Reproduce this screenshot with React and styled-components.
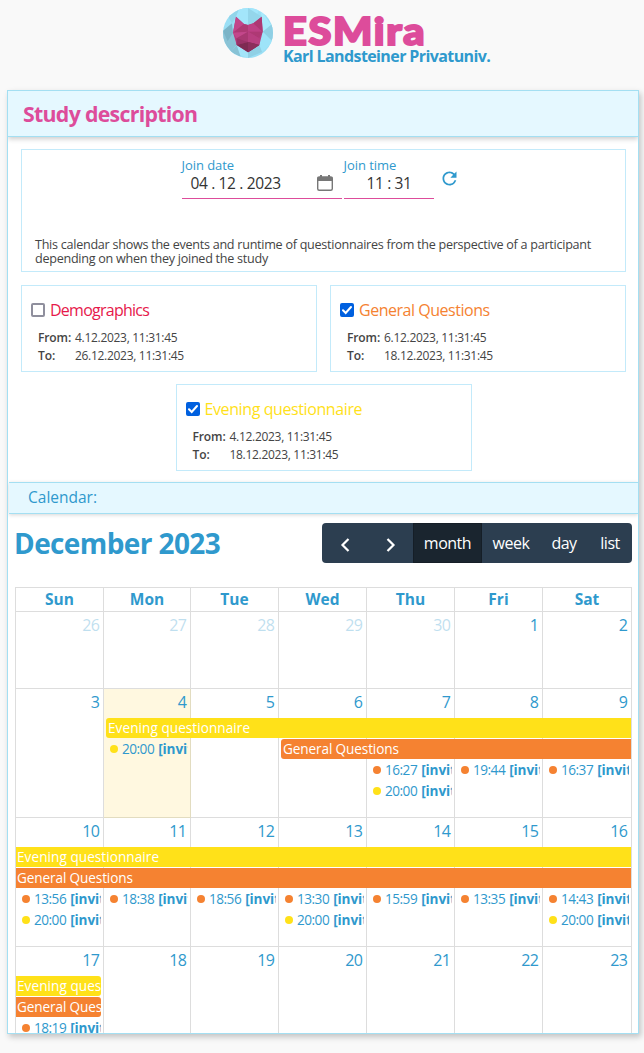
import React from "react";
import styled, { createGlobalStyle } from "styled-components";
import { MdRefresh } from "react-icons/md";

const blue = "#2f99cd";
const pink = "#dd4c9b";
const line = "#a4dff2";
const cardLine = "#c3eafa";
const yellow = "#ffe119";
const orange = "#f58231";
const red = "#e6194b";

const GlobalStyle = createGlobalStyle`
  * { box-sizing: border-box; }
  body {
    margin: 0;
    background: #f9f9f9;
    color: #444;
    font-family: "Open Sans", "Noto Sans", sans-serif;
    overflow: hidden;
  }
`;

const Page = styled.div`
  width: 644px;
  height: 1053px;
  display: flex;
  flex-direction: column;
  overflow: hidden;
`;

const Header = styled.header`
  display: flex;
  height: 90px;
  padding: 8px 0 0 223px;
  gap: 10px;
`;

const Brand = styled.div`
  display: flex;
  flex-direction: column;
  white-space: nowrap;
`;

const BrandName = styled.div`
  height: 39px;
  padding-top: 2px;
  font: 900 37px/41px Lato, sans-serif;
  letter-spacing: 1.5px;
  color: ${pink};
  -webkit-text-stroke: 2px ${pink};
  transform: scaleX(1.12);
  transform-origin: left;
`;

const BrandServer = styled.div`
  font-size: 16px;
  line-height: 19px;
  font-weight: 700;
  letter-spacing: -0.6px;
  color: ${blue};
`;

const Panel = styled.main`
  width: 632px;
  height: 944px;
  margin-left: 7px;
  display: flex;
  flex-direction: column;
  background: #fff;
  border: 1px solid ${line};
  box-shadow: 2px 3px 6px rgba(0, 0, 0, 0.22);
  overflow: hidden;
`;

const Title = styled.h1`
  flex: none;
  height: 46px;
  margin: 0;
  padding-left: 15px;
  background: #e5f8ff;
  border-bottom: 1px solid ${line};
  box-shadow: 0 2px 5px rgba(0, 0, 0, 0.2);
  color: ${pink};
  font-size: 21.3px;
  line-height: 45px;
  letter-spacing: -0.7px;
`;

const JoinBox = styled.section`
  flex: none;
  width: 605px;
  height: 123px;
  margin: 12px 0 13px 13px;
  padding: 7px 13px 0;
  border: 1px solid ${cardLine};
`;

const JoinFields = styled.div`
  display: flex;
  justify-content: center;
  height: 81px;
  padding-right: 6px;
  gap: 2px;
`;

const Field = styled.label`
  display: flex;
  flex-direction: column;
  width: ${(p) => p.$width}px;
  height: 42px;
  font-size: 13px;
  line-height: 16px;
  letter-spacing: -0.05px;
  color: ${blue};
  border-bottom: 1px solid ${pink};
`;

const FieldValue = styled.span`
  display: flex;
  justify-content: space-between;
  align-items: center;
  padding: 0 8px 0 ${(p) => p.$left}px;
  height: 20px;
  font-size: 15.5px;
  letter-spacing: -0.35px;
  color: #333;
  white-space: pre;
`;

const Refresh = styled.button`
  display: flex;
  align-items: center;
  justify-content: center;
  width: 20px;
  height: 20px;
  margin: 11px 0 0 4px;
  padding: 0;
  border: 0;
  background: none;
  color: ${blue};
  svg { flex: none; }
`;

const Note = styled.p`
  margin: 0;
  font-size: 12.6px;
  line-height: 14px;
  letter-spacing: -0.27px;
  white-space: nowrap;
`;

const Cards = styled.section`
  flex: none;
  display: flex;
  flex-wrap: wrap;
  justify-content: center;
  gap: 12px 13px;
  height: 197px;
  padding-left: 1px;
  align-content: flex-start;
`;

const Card = styled.article`
  width: 296px;
  height: 87px;
  padding: 13px 9px 0;
  border: 1px solid ${cardLine};
`;

const CardTitle = styled.label`
  display: flex;
  align-items: center;
  gap: 5px;
  height: 21px;
  margin-bottom: 9px;
  font-size: 16px;
  letter-spacing: ${(p) => p.$spacing}px;
  color: ${(p) => p.$color};
`;

const CheckBox = styled.span`
  display: flex;
  width: 14px;
  height: 14px;
  border: 2px solid ${(p) => (p.$on ? "#0060df" : "#8f8f9d")};
  border-radius: 2px;
  background: ${(p) => (p.$on ? "#0060df" : "#fff")};
  svg { width: 10px; height: 10px; }
`;

const Range = styled.dl`
  display: grid;
  grid-template-columns: 37px 1fr;
  grid-auto-rows: 18px;
  margin: 0 0 0 7px;
  font-size: 12px;
  line-height: 18px;
  letter-spacing: -0.3px;
  dt { font-weight: 600; letter-spacing: -0.1px; }
  dd { margin: 0; }
`;

const SectionBar = styled.h2`
  flex: none;
  height: 32px;
  margin: 0 0 0 1px;
  padding-left: 19px;
  background: #e5f8ff;
  border: solid ${line};
  border-width: 1px 0;
  box-shadow: 0 1px 4px rgba(0, 0, 0, 0.16);
  color: ${blue};
  font-size: 15.5px;
  font-weight: 400;
  line-height: 29px;
`;

const Toolbar = styled.div`
  flex: none;
  display: flex;
  justify-content: space-between;
  align-items: flex-start;
  height: 73px;
  padding: 9px 6px 0 6px;
`;

const Month = styled.h2`
  margin: 0;
  font-size: 28px;
  line-height: 40px;
  letter-spacing: -0.6px;
  color: ${blue};
`;

const ButtonGroup = styled.div`
  display: flex;
  width: 310px;
  height: 40px;
  border-radius: 4px;
  overflow: hidden;
  background: #2c3e50;
`;

const Button = styled.button`
  display: flex;
  align-items: center;
  justify-content: center;
  width: ${(p) => p.$width}px;
  padding: ${(p) => (p.$icon ? "4px 0 0" : "0 0 1px")};
  border: 1px solid ${(p) => (p.$active ? "#151e27" : "transparent")};
  background: ${(p) => (p.$active ? "#1a252f" : "transparent")};
  color: #fff;
  font: 400 16px "Open Sans", sans-serif;
  letter-spacing: -0.5px;
`;

const Calendar = styled.div`
  flex: none;
  width: 617px;
  margin-left: 7px;
  border: solid #ddd;
  border-width: 1px 0 0 1px;
`;

const Week = styled.div`
  display: grid;
  grid-template-columns: 88px 87px 88px 88px 88px 88px 89px;
  grid-template-rows: ${(p) => (p.$empty ? "29px 1fr" : "29px repeat(4, 21px) 1fr")};
  height: ${(p) => p.$height}px;
`;

const DayNames = styled(Week)`
  grid-template-rows: 24px;
`;

const DayName = styled.div`
  border: solid #ddd;
  border-width: 0 1px 1px 0;
  color: ${blue};
  font-size: 15.5px;
  font-weight: 700;
  line-height: 23px;
  text-align: center;
`;

const Day = styled.div`
  grid-row: 1 / -1;
  grid-column: ${(p) => p.$col};
  padding: 3px 4px 0 0;
  border: solid ${(p) => (p.$today ? "#e2dcc0" : "#ddd")};
  border-width: 0 1px 1px 0;
  background: ${(p) => (p.$today ? "#fff8e0" : "#fff")};
  color: ${blue};
  text-align: right;
  font-size: 16px;
  line-height: 20px;
  letter-spacing: -0.8px;
  span { opacity: ${(p) => (p.$muted ? 0.3 : 1)}; }
`;

const Bar = styled.div`
  grid-row: ${(p) => p.$row};
  grid-column: ${(p) => p.$from} / ${(p) => p.$to};
  height: 20px;
  margin: 0 ${(p) => (p.$ends ? 3 : 1)}px 0 ${(p) => (p.$starts ? 2 : 0)}px;
  padding-left: ${(p) => (p.$starts ? 2 : 1)}px;
  border-radius: ${(p) => (p.$starts ? 3 : 0)}px ${(p) => (p.$ends ? 3 : 0)}px ${(p) => (p.$ends ? 3 : 0)}px
    ${(p) => (p.$starts ? 3 : 0)}px;
  background: ${(p) => p.$color};
  color: #fff;
  font-size: 13.6px;
  line-height: 20px;
  letter-spacing: ${(p) => p.$spacing}px;
  white-space: nowrap;
  overflow: hidden;
`;

const Event = styled.div`
  grid-row: ${(p) => p.$row};
  grid-column: ${(p) => p.$col};
  display: flex;
  align-items: center;
  height: 20px;
  margin: 0 3px 0 2px;
  padding-left: 4px;
  color: ${blue};
  font-size: 13.6px;
  line-height: 20px;
  white-space: nowrap;
  overflow: hidden;
  b { margin-left: 4px; letter-spacing: -0.1px; }
`;

const Dot = styled.i`
  flex: none;
  width: 8px;
  height: 8px;
  margin-right: 4px;
  border-radius: 50%;
  background: ${(p) => p.$color};
`;

const Time = styled.span`
  letter-spacing: -0.5px;
`;

function Logo() {
  return (
    <svg width="50" height="50" viewBox="39 24 150 150">
      <defs>
        <clipPath id="disc"><circle cx="114" cy="99" r="75" /></clipPath>
      </defs>
      <g clipPath="url(#disc)">
        <rect x="39" y="24" width="150" height="150" fill="#9adff5" />
        <path d="M39 24h50L78 50 66 70z" fill="#92d5ea" />
        <path d="M89 24h60l-19 46-28 2-24-22z" fill="#a3e6fb" />
        <path d="M114 24l41 26-25 20-16 5z" fill="#94d6eb" />
        <path d="M149 24l40 60-31 11-3-45z" fill="#a8e9fc" />
        <path d="M189 70v56l-31-31z" fill="#8fcfe4" />
        <path d="M158 95l31 31-33 30-8-21z" fill="#9ee4f9" />
        <path d="M156 156l-42 18v-17l34-22z" fill="#90d0e5" />
        <path d="M39 92l30 6 11 37-16 20-25-30z" fill="#8ac3d6" />
        <path d="M39 92l27-22 3 28-16 26z" fill="#7bb4c7" />
        <path d="M64 155l16-20 34 22v17z" fill="#a3e5f9" />
        <path d="M80 135l12 35-30-14z" fill="#88c2d5" />
      </g>
      <path d="M78 50l24 22 12 3 16-5 25-20 3 45-10 40-34 22-34-22-11-37z" fill="#b83d80" />
      <path d="M78 50l24 22-33 26z" fill="#c2458a" />
      <path d="M102 72l12 3v20l-45 3z" fill="#ae3974" />
      <path d="M114 75l16-5 28 25-44 0z" fill="#bd4185" />
      <path d="M155 50l-25 20 28 25z" fill="#ad3873" />
      <path d="M69 98l45-3-34 20z" fill="#c3478b" />
      <path d="M158 95h-44l34 20z" fill="#ae3974" />
      <path d="M114 95l-34 20v20l34-9z" fill="#a93872" />
      <path d="M114 95l34 20v20l-34-9z" fill="#b83f80" />
      <path d="M80 135v-20l34 11z" fill="#9a3368" />
      <path d="M80 135l34-9 34 9-34 22z" fill="#7e2a52" />
      <path d="M114 126l34 9-34 22z" fill="#8c2e5c" />
    </svg>
  );
}

const CalendarIcon = () => (
  <svg width="18" height="18" viewBox="0 0 18 18">
    <rect x="1.700" y="3" width="14.600" height="13.300" rx="1.500" fill="none" stroke="#777" strokeWidth="1.400" />
    <path d="M1.500 3h15v4h-15zM4 1h2v2H4zM12 1h2v2h-2z" fill="#777" />
  </svg>
);

const Chevron = ({ d }) => (
  <svg width="16" height="18" viewBox="0 0 16 18" fill="none" stroke="#fff" strokeWidth="2.2">
    <path d={d} />
  </svg>
);

function Questionnaire({ name, color, spacing, on, from, to }) {
  return (
    <Card>
      <CardTitle $color={color} $spacing={spacing}>
        <CheckBox $on={on}>
          {on && (
            <svg viewBox="0 0 10 10" fill="none" stroke="#fff" strokeWidth="2" strokeLinecap="round">
              <path d="M1 5.200L3.700 8 9 2" />
            </svg>
          )}
        </CheckBox>
        {name}
      </CardTitle>
      <Range>
        <dt>From:</dt>
        <dd>{from}</dd>
        <dt>To:</dt>
        <dd>{to}</dd>
      </Range>
    </Card>
  );
}

const evening = "Evening questionnaire";
const general = "General Questions";

const weeks = [
  { height: 77, days: [26, 27, 28, 29, 30, 1, 2], muted: 5, bars: [], events: [] },
  {
    height: 129,
    days: [3, 4, 5, 6, 7, 8, 9],
    today: 4,
    bars: [
      { name: evening, color: yellow, spacing: 0.05, row: 2, from: 2, to: 8, starts: true },
      { name: general, color: orange, spacing: -0.12, row: 3, from: 4, to: 8, starts: true },
    ],
    events: [
      [2, 3, "20:00", yellow],
      [5, 4, "16:27", orange],
      [5, 5, "20:00", yellow],
      [6, 4, "19:44", orange],
      [7, 4, "16:37", orange],
    ],
  },
  {
    height: 129,
    days: [10, 11, 12, 13, 14, 15, 16],
    bars: [
      { name: evening, color: yellow, spacing: 0.05, row: 2, from: 1, to: 8 },
      { name: general, color: orange, spacing: -0.12, row: 3, from: 1, to: 8 },
    ],
    events: [
      [1, 4, "13:56", orange],
      [1, 5, "20:00", yellow],
      [2, 4, "18:38", orange],
      [3, 4, "18:56", orange],
      [4, 4, "13:30", orange],
      [4, 5, "20:00", yellow],
      [5, 4, "15:59", orange],
      [6, 4, "13:35", orange],
      [7, 4, "14:43", orange],
      [7, 5, "20:00", yellow],
    ],
  },
  {
    height: 129,
    days: [17, 18, 19, 20, 21, 22, 23],
    bars: [
      { name: "Evening ques", color: yellow, spacing: 0.05, row: 2, from: 1, to: 2, ends: true },
      { name: "General Ques", color: orange, spacing: -0.12, row: 3, from: 1, to: 2, ends: true },
    ],
    events: [[1, 4, "18:19", orange]],
  },
];

export default function App() {
  return (
    <Page>
      <GlobalStyle />
      <Header>
        <Logo />
        <Brand>
          <BrandName>ESMira</BrandName>
          <BrandServer>Karl Landsteiner Privatuniv.</BrandServer>
        </Brand>
      </Header>
      <Panel>
        <Title>Study description</Title>
        <JoinBox>
          <JoinFields>
            <Field $width={160}>
              Join date
              <FieldValue $left={9}>
                04 . 12 . 2023
                <CalendarIcon />
              </FieldValue>
            </Field>
            <Field $width={90}>
              Join time
              <FieldValue $left={23}>11 : 31</FieldValue>
            </Field>
            <Refresh><MdRefresh size={21} /></Refresh>
          </JoinFields>
          <Note>
            This calendar shows the events and runtime of questionnaires from the perspective of a participant
            <br />
            depending on when they joined the study
          </Note>
        </JoinBox>
        <Cards>
          <Questionnaire name="Demographics" color={red} spacing={-0.75} from="4.12.2023, 11:31:45" to="26.12.2023, 11:31:45" />
          <Questionnaire name={general} color={orange} spacing={-0.47} on from="6.12.2023, 11:31:45" to="18.12.2023, 11:31:45" />
          <Questionnaire name={evening} color={yellow} spacing={-0.4} on from="4.12.2023, 11:31:45" to="18.12.2023, 11:31:45" />
        </Cards>
        <SectionBar>Calendar:</SectionBar>
        <Toolbar>
          <Month>December 2023</Month>
          <ButtonGroup>
            <Button $width={46} $icon><Chevron d="M11.500 3L5.500 9l6 6" /></Button>
            <Button $width={45} $icon><Chevron d="M4.500 3l6 6-6 6" /></Button>
            <Button $width={69} $active>month</Button>
            <Button $width={58}>week</Button>
            <Button $width={48}>day</Button>
            <Button $width={44}>list</Button>
          </ButtonGroup>
        </Toolbar>
        <Calendar>
          <DayNames $height={24}>
            {["Sun", "Mon", "Tue", "Wed", "Thu", "Fri", "Sat"].map((d) => <DayName key={d}>{d}</DayName>)}
          </DayNames>
          {weeks.map((w) => (
            <Week key={w.days[0]} $height={w.height} $empty={!w.bars.length}>
              {w.days.map((d, i) => (
                <Day key={d} $col={i + 1} $today={d === w.today} $muted={i < (w.muted || 0)}>
                  <span>{d}</span>
                </Day>
              ))}
              {w.bars.map((b) => (
                <Bar
                  key={b.name}
                  $color={b.color}
                  $spacing={b.spacing}
                  $row={b.row}
                  $from={b.from}
                  $to={b.to}
                  $starts={b.starts}
                  $ends={b.ends}
                >
                  {b.name}
                </Bar>
              ))}
              {w.events.map(([col, row, time, color]) => (
                <Event key={`${col}-${row}`} $col={col} $row={row}>
                  <Dot $color={color} />
                  <Time>{time}</Time>
                  <b>[invit</b>
                </Event>
              ))}
            </Week>
          ))}
        </Calendar>
      </Panel>
    </Page>
  );
}
